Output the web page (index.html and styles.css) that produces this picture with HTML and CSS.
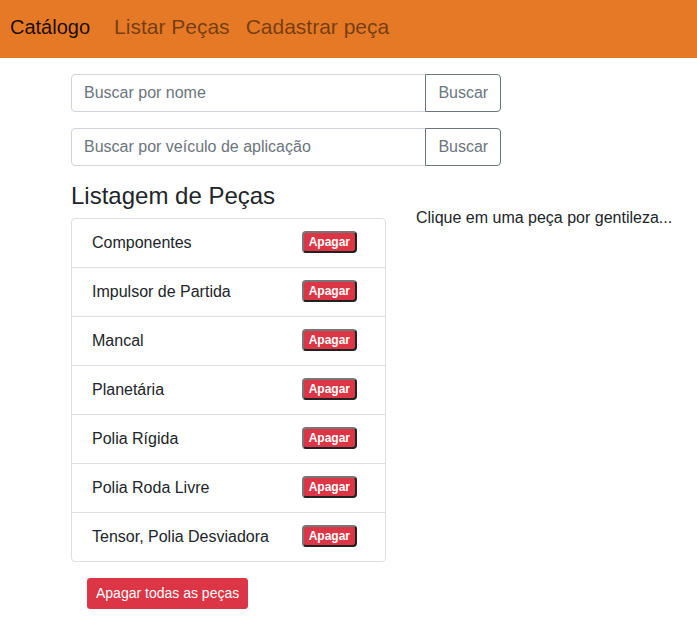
FILE: index.html
```html
<!DOCTYPE html>
<html lang="pt-BR">
<head>
<meta charset="utf-8">
<meta name="viewport" content="width=device-width, initial-scale=1">
<title>Catálogo</title>
<link rel="stylesheet" href="styles.css">
</head>
<body>
<nav class="navbar">
  <a class="brand" href="#">Catálogo</a>
  <a class="nav-link" href="#">Listar Peças</a>
  <a class="nav-link" href="#">Cadastrar peça</a>
</nav>
<main class="container">
  <form class="search">
    <input type="text" placeholder="Buscar por nome" aria-label="Buscar por nome">
    <button type="button">Buscar</button>
  </form>
  <form class="search">
    <input type="text" placeholder="Buscar por veículo de aplicação" aria-label="Buscar por veículo de aplicação">
    <button type="button">Buscar</button>
  </form>
  <div class="row">
    <section class="parts">
      <h4>Listagem de Peças</h4>
      <ul class="list">
        <li><span>Componentes</span><button class="delete" type="button">Apagar</button></li>
        <li><span>Impulsor de Partida</span><button class="delete" type="button">Apagar</button></li>
        <li><span>Mancal</span><button class="delete" type="button">Apagar</button></li>
        <li><span>Planetária</span><button class="delete" type="button">Apagar</button></li>
        <li><span>Polia Rígida</span><button class="delete" type="button">Apagar</button></li>
        <li><span>Polia Roda Livre</span><button class="delete" type="button">Apagar</button></li>
        <li><span>Tensor, Polia Desviadora</span><button class="delete" type="button">Apagar</button></li>
      </ul>
      <button class="delete-all" type="button">Apagar todas as peças</button>
    </section>
    <section class="detail">
      <p>Clique em uma peça por gentileza...</p>
    </section>
  </div>
</main>
</body>
</html>
```

FILE: styles.css
```css
*, *::before, *::after {
  box-sizing: border-box;
}

body {
  margin: 0;
  background: #fff;
  color: #212529;
  font: 16px/24px "Liberation Sans", Arial, sans-serif;
}

button, input {
  font-family: inherit;
}

.navbar {
  display: flex;
  align-items: center;
  padding: 8px 10px 12px;
  background: #e67925;
  font-size: 20px;
  line-height: 38px;
}

.navbar a {
  text-decoration: none;
}

.brand {
  margin-right: 16px;
  color: rgba(0, 0, 0, 0.9);
}

.nav-link {
  padding: 0 8px;
  color: rgba(0, 0, 0, 0.5);
  font-size: 21px;
}

.container {
  padding: 16px 0 0 71px;
}

.search {
  display: flex;
  width: calc(70% - 8px);
  max-width: 730px;
  margin: 0 0 16px;
}

.search input {
  flex: 1;
  min-width: 0;
  height: 38px;
  padding: 6px 12px;
  border: 1px solid #ced4da;
  border-radius: 4px 0 0 4px;
  font-size: 16px;
  line-height: 24px;
  color: #495057;
}

.search input::placeholder {
  color: #6c757d;
  opacity: 1;
}

.search button {
  margin-left: -1px;
  padding: 6px 12px;
  border: 1px solid #6c757d;
  border-radius: 0 4px 4px 0;
  background: #fff;
  color: #6c757d;
  font-size: 16px;
  line-height: 24px;
}

.row {
  display: grid;
  grid-template-columns: calc(50% + 2px) 1fr;
  gap: 30px;
}

.parts h4 {
  margin: 0 0 8px;
  font-size: 24px;
  font-weight: 500;
  line-height: 28px;
}

.list {
  margin: 0 0 16px;
  padding: 0;
  list-style: none;
  border: 1px solid #dfdfdf;
  border-radius: 4px;
}

.list li {
  display: flex;
  align-items: start;
  justify-content: space-between;
  padding: 12px 28px 12px 20px;
}

.list li + li {
  border-top: 1px solid #dfdfdf;
}

.delete {
  padding: 2px 5px;
  border: 2px solid;
  border-color: #767676 #212121 #212121 #767676;
  border-radius: 4px;
  background: #dc3545;
  color: #fff;
  font-size: 12px;
  font-weight: 700;
  line-height: 14px;
}

.delete-all {
  margin-left: 16px;
  padding: 4px 8px;
  border: 1px solid #dc3545;
  border-radius: 3px;
  background: #dc3545;
  color: #fff;
  font-size: 14px;
  line-height: 21px;
}

.detail p {
  margin: 24px 0 0;
}
```
